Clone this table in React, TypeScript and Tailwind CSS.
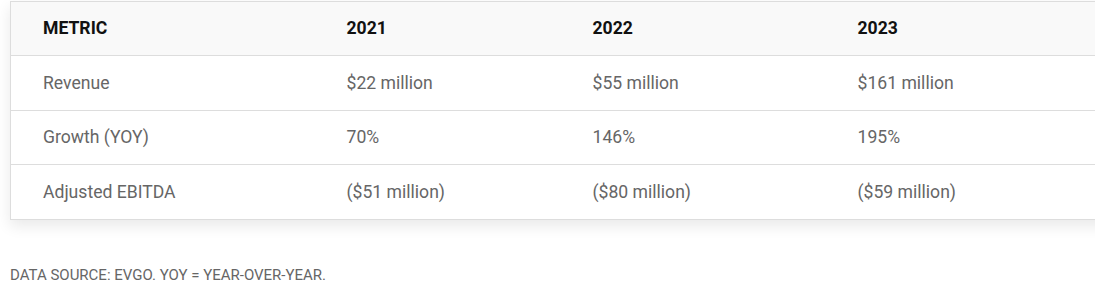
const rows = [
  { metric: "Revenue", values: ["$22 million", "$55 million", "$161 million"] },
  { metric: "Growth (YOY)", values: ["70%", "146%", "195%"] },
  { metric: "Adjusted EBITDA", values: ["($51 million)", "($80 million)", "($59 million)"] }
];

const years = ["2021", "2022", "2023"];

export default function App() {
  return (
    <main className="h-[287px] w-[1095px] overflow-hidden bg-white font-['Roboto',sans-serif]">
      <div className="pl-[10px] pt-[1px]">
        <table className="w-[1130px] table-fixed border-collapse border border-[#dddddd] bg-white text-[17.6px] shadow-[0_6px_14px_rgba(0,0,0,0.09)]">
          <colgroup>
            <col className="w-[304px]" />
            <col className="w-[246px]" />
            <col className="w-[265px]" />
            <col />
          </colgroup>
          <thead>
            <tr className="h-[54px] border-b border-[#dddddd] bg-[#f9f9f9]">
              <th className="pl-8 text-left font-bold text-[#111111]">METRIC</th>
              {years.map((year) => (
                <th key={year} className="pl-8 text-left font-bold text-[#111111]">
                  {year}
                </th>
              ))}
            </tr>
          </thead>
          <tbody>
            {rows.map((row) => (
              <tr key={row.metric} className="h-[54.5px] border-b border-[#dddddd] last:border-b-0">
                <td className="pl-8 text-[#666666]">{row.metric}</td>
                {row.values.map((value) => (
                  <td key={value} className="pl-8 text-[#666666]">
                    {value}
                  </td>
                ))}
              </tr>
            ))}
          </tbody>
        </table>
        <p className="mt-[44px] text-[15px] uppercase text-[#666666]">Data source: EVgo. YOY = year-over-year.</p>
      </div>
    </main>
  );
}
